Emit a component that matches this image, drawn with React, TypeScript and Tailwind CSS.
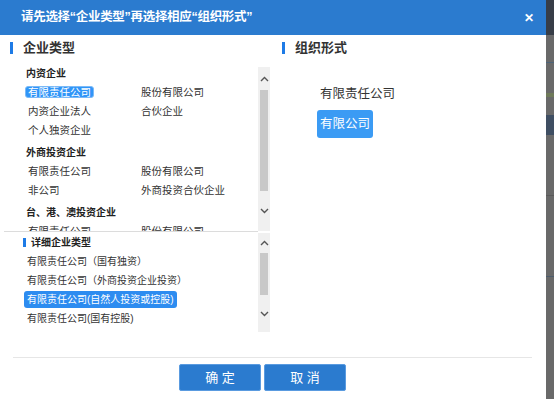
import React from "react";

const font = { fontFamily: '"Liberation Sans", "Noto Sans CJK SC", sans-serif' };

const Chevron = ({ up }: { up?: boolean }) => (
  <svg width="9" height="6" viewBox="0 0 9 6" className="block">
    <polyline
      points={up ? "1,5 4.5,1.5 8,5" : "1,1 4.5,4.5 8,1"}
      fill="none"
      stroke="#555"
      strokeWidth="1.4"
    />
  </svg>
);

// fake native scrollbar
const ScrollBar = ({ top, thumb, gap }: { top: number; thumb: number; gap: number }) => (
  <div className="w-[12px] h-full bg-[#f0f0f0] flex flex-col items-center">
    <div className="flex items-center justify-center" style={{ height: top }}>
      <Chevron up />
    </div>
    <div className="w-[8px] bg-[#c8c8c8]" style={{ height: thumb }} />
    <div className="flex items-center justify-center" style={{ height: gap }}>
      <Chevron />
    </div>
  </div>
);

const SectionTitle = ({ text }: { text: string }) => (
  <div className="flex items-center h-[12px] gap-[10px]">
    <div className="w-[3px] h-[12px] bg-[#1e7be6]" />
    <span className="text-[13px] leading-[12px] font-bold text-[#333]">{text}</span>
  </div>
);

const Item = ({ text, active }: { text: string; active?: boolean }) => (
  <div className="h-[19px] flex items-center">
    <span
      className={
        active
          ? "px-[2px] h-[12px] leading-[11px] rounded-[3px] bg-[#3095f8] border border-[#7bbaf7] text-white"
          : "px-[3px] leading-[12px] text-[#333]"
      }
    >
      {text}
    </span>
  </div>
);

const groups = [
  { name: "内资企业", items: ["有限责任公司", "股份有限公司", "内资企业法人", "合伙企业", "个人独资企业"] },
  { name: "外商投资企业", items: ["有限责任公司", "股份有限公司", "非公司", "外商投资合伙企业"] },
  { name: "台、港、澳投资企业", items: ["有限责任公司", "股份有限公司"] },
];

const details = [
  "有限责任公司（国有独资）",
  "有限责任公司（外商投资企业投资）",
  "有限责任公司(自然人投资或控股)",
  "有限责任公司(国有控股)",
];

export default function App() {
  return (
    <div className="w-[554px] h-[399px] flex overflow-hidden" style={font}>
      <div className="w-[546px] h-full bg-white flex flex-col">
        {/* header */}
        <div className="h-[35px] bg-[#2b7bcf] flex items-center justify-between pl-[21px] pr-[12px]">
          <span className="text-[12.5px] tracking-[-0.3px] font-bold text-white">请先选择“企业类型”再选择相应“组织形式”</span>
          <span className="text-white text-[12px] font-bold leading-none">✕</span>
        </div>

        <div className="flex h-[322px]">
          {/* left */}
          <div className="w-[270px] flex flex-col">
            <div className="pt-[7px] pb-[11px] pl-[10px]">
              <SectionTitle text="企业类型" />
            </div>
            <div className="ml-[13px] h-[166px] flex">
              <div className="flex-1 overflow-hidden pl-[13px] pt-px">
                {groups.map((g, i) => (
                  <div key={g.name} className={i > 0 ? "mt-[6px]" : ""}>
                    <div className="h-[16px] leading-[16px] text-[10px] font-bold text-[#222]">{g.name}</div>
                    <div className="grid grid-cols-[113px_1fr] text-[10.5px] -ml-px">
                      {g.items.map((t, j) => (
                        <Item key={j} text={t} active={i === 0 && j === 0} />
                      ))}
                    </div>
                  </div>
                ))}
              </div>
              <div className="pt-[2px]">
                <ScrollBar top={23} thumb={101} gap={40} />
              </div>
            </div>
            <div className="ml-[4px] w-[254px] h-px bg-[#dcdcdc]" />
            <div className="ml-[13px] h-[100px] flex">
              <div className="flex-1 overflow-hidden pl-[10px]">
                <div className="h-[20px] flex items-center gap-[5px]">
                  <div className="w-[3px] h-[9px] bg-[#1e7be6]" />
                  <span className="text-[10px] font-bold text-[#222]">详细企业类型</span>
                </div>
                <div className="text-[10px] ml-px">
                  {details.map((t, j) =>
                    j === 2 ? (
                      <div key={j} className="h-[19px] flex items-center">
                        <span className="px-[3px] h-[17px] leading-[17px] rounded-[3px] bg-[#2d8cf0] text-white">{t}</span>
                      </div>
                    ) : (
                      <div key={j} className="h-[19px] flex items-center">
                        <span className="px-[3px] text-[#333]">{t}</span>
                      </div>
                    )
                  )}
                </div>
              </div>
              <div className="pt-px">
                <ScrollBar top={20} thumb={42} gap={37} />
              </div>
            </div>
          </div>

          {/* right */}
          <div className="flex-1 flex flex-col pl-[12px]">
            <div className="pt-[7px] pb-[26px]">
              <SectionTitle text="组织形式" />
            </div>
            <div className="pl-[35px] flex flex-col gap-[2px] text-[12.5px]">
              <div className="h-[28px] flex items-center">
                <span className="px-[3px] text-[#333]">有限责任公司</span>
              </div>
              <div className="h-[28px] flex items-center">
                <span className="px-[3px] h-[28px] leading-[28px] rounded-[3px] bg-[#3b9bf4] text-white">有限公司</span>
              </div>
            </div>
          </div>
        </div>

        {/* footer */}
        <div className="ml-[13px] w-[519px] h-px bg-[#e6e6e6]" />
        <div className="flex gap-[3px] pl-[179px] pt-[6px]">
          <button className="w-[82px] h-[27px] rounded-[2px] bg-[#2b7bcf] border border-[#5a9be0] text-white text-[13px]">确 定</button>
          <button className="w-[82px] h-[27px] rounded-[2px] bg-[#2b7bcf] border border-[#5a9be0] text-white text-[13px]">取 消</button>
        </div>
      </div>

      {/* backdrop strip of the page behind */}
      <div className="flex-1 bg-[#696969] flex flex-col">
        <div className="h-[35px] bg-[#373d47]" />
        <div className="h-[26px] mt-[2px] border-b border-[#4d6478]" />
        <div className="h-[4px] mt-[30px] bg-[#6f7a5a]" />
        <div className="h-[20px] mt-[18px] bg-[#3f4e62]" />
        <div className="h-px mt-[60px] bg-[#5a5a5a]" />
        <div className="h-px mt-[80px] bg-[#4c5c6c]" />
      </div>
    </div>
  );
}
